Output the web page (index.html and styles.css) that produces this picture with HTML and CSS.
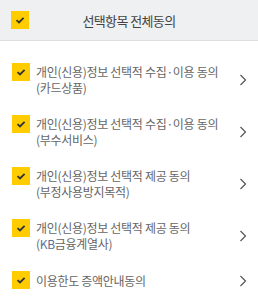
FILE: index.html
```html
<!DOCTYPE html>
<html>
<head>
    <link rel="stylesheet" href="styles.css">
</head>
<body>
    <div class="agree-box">
        <div class="agree-all">
            <span class="check"><svg viewBox="0 0 18 18" width="18" height="18"><path d="M5.5 9.2 L8 11.5 L12.6 6.8" fill="none" stroke="#333" stroke-width="1.8"/></svg></span>
            <span class="agree-all-title">선택항목 전체동의</span>
        </div>
        <ul class="agree-list">
            <li class="agree-item">
                <span class="check"><svg viewBox="0 0 18 18" width="18" height="18"><path d="M5.5 9.2 L8 11.5 L12.6 6.8" fill="none" stroke="#333" stroke-width="1.8"/></svg></span>
                <span class="agree-text">개인(신용)정보 선택적 수집·이용 동의<br>(카드상품)</span>
                <span class="arrow"><svg viewBox="0 0 8 12" width="8" height="12"><path d="M1.5 1 L6.5 6 L1.5 11" fill="none" stroke="#555" stroke-width="1.2"/></svg></span>
            </li>
            <li class="agree-item">
                <span class="check"><svg viewBox="0 0 18 18" width="18" height="18"><path d="M5.5 9.2 L8 11.5 L12.6 6.8" fill="none" stroke="#333" stroke-width="1.8"/></svg></span>
                <span class="agree-text">개인(신용)정보 선택적 수집·이용 동의<br>(부수서비스)</span>
                <span class="arrow"><svg viewBox="0 0 8 12" width="8" height="12"><path d="M1.5 1 L6.5 6 L1.5 11" fill="none" stroke="#555" stroke-width="1.2"/></svg></span>
            </li>
            <li class="agree-item">
                <span class="check"><svg viewBox="0 0 18 18" width="18" height="18"><path d="M5.5 9.2 L8 11.5 L12.6 6.8" fill="none" stroke="#333" stroke-width="1.8"/></svg></span>
                <span class="agree-text">개인(신용)정보 선택적 제공 동의<br>(부정사용방지목적)</span>
                <span class="arrow"><svg viewBox="0 0 8 12" width="8" height="12"><path d="M1.5 1 L6.5 6 L1.5 11" fill="none" stroke="#555" stroke-width="1.2"/></svg></span>
            </li>
            <li class="agree-item">
                <span class="check"><svg viewBox="0 0 18 18" width="18" height="18"><path d="M5.5 9.2 L8 11.5 L12.6 6.8" fill="none" stroke="#333" stroke-width="1.8"/></svg></span>
                <span class="agree-text">개인(신용)정보 선택적 제공 동의<br>(<span class="kb">KB</span>금융계열사)</span>
                <span class="arrow"><svg viewBox="0 0 8 12" width="8" height="12"><path d="M1.5 1 L6.5 6 L1.5 11" fill="none" stroke="#555" stroke-width="1.2"/></svg></span>
            </li>
            <li class="agree-item">
                <span class="check"><svg viewBox="0 0 18 18" width="18" height="18"><path d="M5.5 9.2 L8 11.5 L12.6 6.8" fill="none" stroke="#333" stroke-width="1.8"/></svg></span>
                <span class="agree-text">이용한도 증액안내동의</span>
                <span class="arrow"><svg viewBox="0 0 8 12" width="8" height="12"><path d="M1.5 1 L6.5 6 L1.5 11" fill="none" stroke="#555" stroke-width="1.2"/></svg></span>
            </li>
        </ul>
    </div>
</body>
</html>
```

FILE: styles.css
```css
body {
    margin: 0;
    background-color: #fff;
    font-family: "Noto Sans CJK KR", "Noto Sans", sans-serif;
}

.agree-box {
    width: 258px;
}

.agree-all {
    display: flex;
    align-items: center;
    height: 40px;
    padding-left: 11px;
    background-color: #eef0f2;
    border-bottom: 1px solid #dcdee1;
}

.check {
    display: flex;
    width: 18px;
    height: 18px;
    flex-shrink: 0;
    background-color: #ffcc00;
}

.agree-all-title {
    flex: 1;
    text-align: center;
    padding-right: 29px;
    font-size: 13px;
    letter-spacing: -0.6px;
    color: #444;
}

.agree-list {
    list-style: none;
    margin: 0;
    padding: 13px 0 0 0;
}

.agree-item {
    display: flex;
    align-items: center;
    padding: 10px 11px 10px 12px;
}

.agree-item .check {
    align-self: flex-start;
    margin-top: -1px;
}

.agree-text {
    flex: 1;
    padding-left: 6px;
    font-size: 12px;
    line-height: 16px;
    letter-spacing: -0.3px;
    color: #666;
}

.kb {
    color: #56709c;
}

.arrow {
    display: flex;
    width: 8px;
    height: 12px;
}
```
